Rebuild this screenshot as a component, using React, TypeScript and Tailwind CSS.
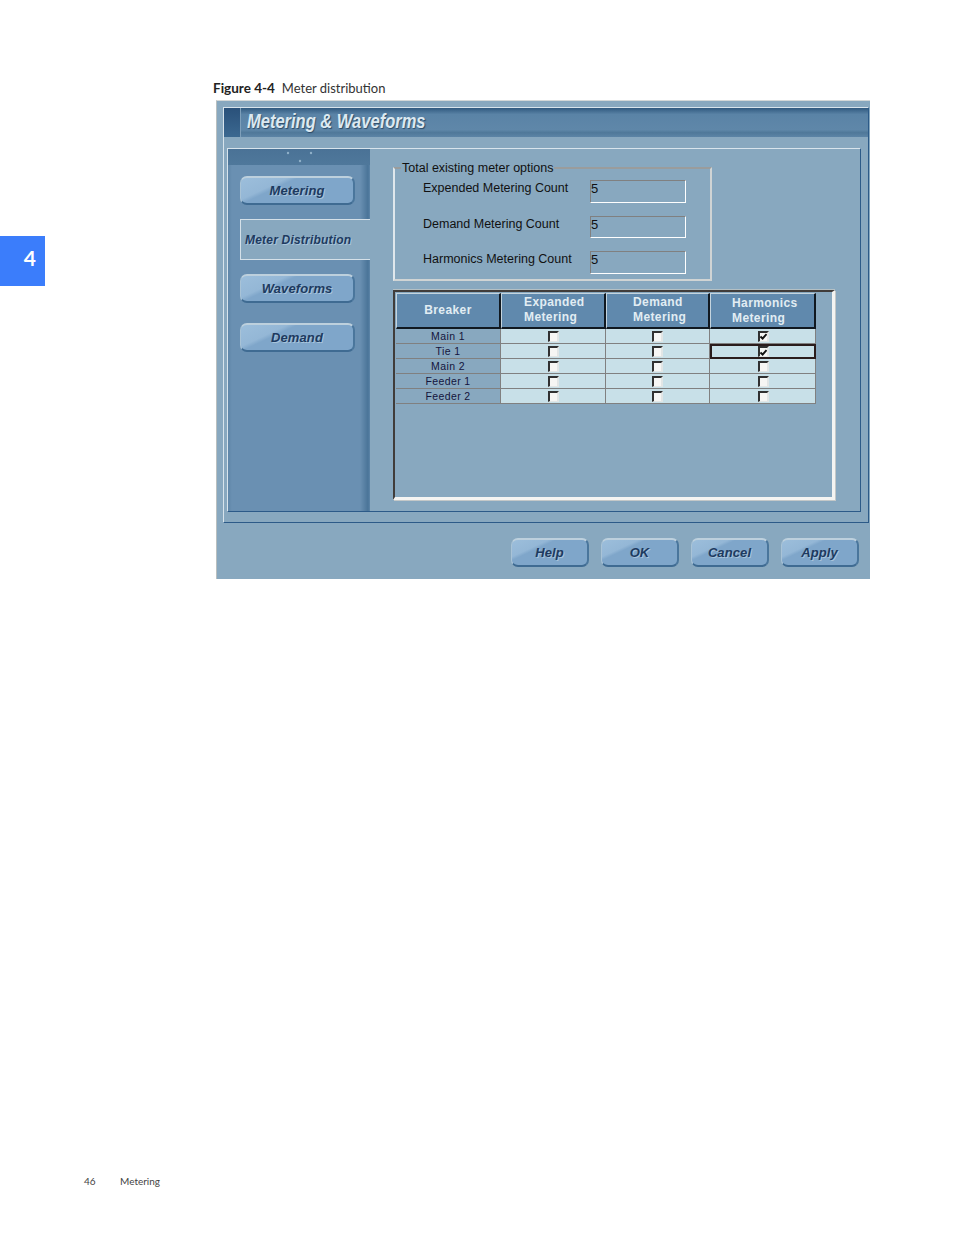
import type { ReactNode } from "react";

const SANS = "font-['Liberation_Sans',Arial,sans-serif]";
const rows = ["Main 1", "Tie 1", "Main 2", "Feeder 1", "Feeder 2"];
const counts = [
  { label: "Expended Metering Count", h: "h-[23px]" },
  { label: "Demand Metering Count", h: "h-[22px]" },
  { label: "Harmonics Metering Count", h: "h-[23px]" },
];

function SkinButton({ children, wide }: { children: ReactNode; wide?: boolean }) {
  return (
    <button
      className={`flex h-[29px] items-center justify-center rounded-[7px] border border-b-2 border-r-2 border-t-2 border-b-[#3f6b92] border-l-[#a9c3d6] border-r-[#4a769c] border-t-[#bdd0dd] bg-[linear-gradient(155deg,#9cbedb_0%,#94b7d6_28%,#7fa6ca_34%,#7fa6ca_100%)] text-[13px] font-bold italic tracking-[0.1px] text-[#1d3a60] [text-shadow:1px_1px_0_#a8c4da] ${wide ? "w-[115px]" : "w-[78px]"}`}
    >
      {children}
    </button>
  );
}

function CheckBox({ checked }: { checked?: boolean }) {
  return (
    <div className="flex h-[11px] w-[11px] items-center justify-center border-b border-l-2 border-r-2 border-t-2 border-b-[#e2e6e6] border-l-[#303030] border-r-[#e2e6e6] border-t-[#303030] bg-[#f6f6f4]">
      {checked && (
        <svg width="8" height="7" viewBox="0 0 8 7">
          <path d="M0.5 3.5 L3 5.8 L7.5 0.8" fill="none" stroke="#111" strokeWidth="2.2" />
        </svg>
      )}
    </div>
  );
}

function HeadCell({ children, className }: { children: ReactNode; className?: string }) {
  return (
    <div className={`h-[36px] border-b-2 border-l border-r-2 border-t border-b-[#101820] border-l-[#c4d4de] border-r-[#101820] border-t-[#c4d4de] bg-[#6089ad] text-[12px] font-bold leading-[15px] tracking-[0.4px] text-[#e2edf3] ${className ?? ""}`}>
      {children}
    </div>
  );
}

export default function App() {
  return (
    <div className="flex h-[1235px] w-[954px] flex-col overflow-hidden bg-white font-['Lato',sans-serif]">
      <div className="flex">
        <div className="w-[45px] pt-[236px]">
          <div className="h-[50px] w-[45px] bg-[#3b7dfb] pr-[9px] pt-[7px] text-right text-[21px] font-bold leading-[30px] text-white">4</div>
        </div>

        <div className="ml-[168px] pt-[80px]">
          <div className="h-[16px] text-[13px] leading-[16px] text-[#333]">
            <span className="text-[13.5px] font-bold text-[#222]">Figure 4-4</span>
            <span className="ml-[7px]">Meter distribution</span>
          </div>

          {/* dialog */}
          <div className={`ml-[3px] mt-[4px] h-[479px] w-[654px] border-l border-t border-l-[#b9bfbf] border-t-[#d4d8d8] bg-[#88a8bf] pl-[6px] pt-[6px] ${SANS}`}>
            <div className="h-[416px] w-[646px] border border-b-[#2c5a88] border-l-[#d8e4ec] border-r-[#2c5a88] border-t-[#d8e4ec]">
              <div className="flex h-[29px] bg-[linear-gradient(180deg,#30597f_0%,#5a83a6_22%,#5f87a9_75%,#4f7899_85%,#5c84a6_100%)]">
                <div className="h-full w-[17px] border-r border-r-[#7e9fba] bg-[linear-gradient(180deg,#2a517a,#3b6890)]" />
                <div className="ml-[6px] origin-left scale-x-[0.825] whitespace-nowrap text-[20px] font-bold italic leading-[27px] text-[#dce9f1] [text-shadow:1px_1px_1px_#2c4a68]">Metering &amp; Waveforms</div>
              </div>

              <div className="ml-[3px] mt-[11px] flex h-[364px] w-[634px] border border-b-[#2c5a88] border-l-[#d8e4ec] border-r-[#2c5a88] border-t-[#d8e4ec]">
                {/* side nav */}
                <div className="flex h-full w-[142px] flex-col bg-[linear-gradient(90deg,#5f86a8_0px,#6a90b2_4px,#6a90b2_132px,#4a7498_140px,#5d85a8_142px)]">
                  <div className="flex h-[16px] items-start justify-center bg-[linear-gradient(180deg,#4a7296,#4f789b)]">
                    <svg width="30" height="14" viewBox="0 0 30 14">
                      <circle cx="4" cy="4" r="1.2" fill="#8fb0c8" />
                      <circle cx="27" cy="4" r="1.2" fill="#8fb0c8" />
                      <circle cx="16" cy="12" r="1.2" fill="#8fb0c8" />
                    </svg>
                  </div>
                  <div className="ml-[12px] mt-[11px]">
                    <SkinButton wide>Metering</SkinButton>
                  </div>
                  <div className="ml-[12px] mt-[14px] h-[41px] w-[130px] border-b border-l border-t border-b-[#d4e0e8] border-l-[#d4e0e8] border-t-[#d4e0e8] bg-[#88a8bf] pl-[4px] text-[12px] font-bold italic leading-[40px] tracking-[0.2px] text-[#1d3a60] [text-shadow:1px_1px_0_#a8c4da]">
                    Meter Distribution
                  </div>
                  <div className="ml-[12px] mt-[14px]">
                    <SkinButton wide>Waveforms</SkinButton>
                  </div>
                  <div className="ml-[12px] mt-[20px]">
                    <SkinButton wide>Demand</SkinButton>
                  </div>
                </div>

                {/* main panel */}
                <div className="pl-[23px] pt-[11px]">
                  <fieldset className="h-[121px] w-[319px] border-2 border-b-[#d0d4d4] border-l-[#dfe7ec] border-r-[#d0d4d4] border-t-[#9a9c9c] pt-[4px]">
                    <legend className="ml-[6px] h-[16px] px-[1px] text-[12.5px] leading-[16px] text-[#111]">Total existing meter options</legend>
                    <div className="flex flex-col gap-[13px] pl-[28px]">
                      {counts.map(({ label, h }) => (
                        <div key={label} className="flex">
                          <div className="w-[167px] text-[12.5px] leading-[16px] text-[#111]">{label}</div>
                          <div className={`w-[96px] border border-b-white border-l-[#808080] border-r-white border-t-[#808080] text-[13px] leading-[16px] text-[#111] ${h}`}>5</div>
                        </div>
                      ))}
                    </div>
                  </fieldset>

                  <div className="mt-[9px] h-[210px] w-[442px] border-b-[3px] border-l-2 border-r-[3px] border-t-2 border-b-[#f4f4f2] border-l-[#403c3a] border-r-[#f4f4f2] border-t-[#403c3a] pl-[1px] pt-[1px] shadow-[0_-1px_0_#b4c0c4,1px_1px_0_#c4c8c8]">
                    <div className="grid w-[420px] grid-cols-[105px_105px_104px_106px]">
                      <HeadCell className="pt-[9px] text-center">Breaker</HeadCell>
                      <HeadCell className="pl-[22px] pt-[1px]">Expanded<br />Metering</HeadCell>
                      <HeadCell className="pl-[26px] pt-[1px]">Demand<br />Metering</HeadCell>
                      <HeadCell className="pl-[21px] pt-[2px]">Harmonics<br />Metering</HeadCell>
                      {rows.map((name, r) => (
                        <div key={name} className="contents">
                          <div className="h-[15px] border-b border-r border-[#808080] bg-[#88a8bf] text-center text-[10.5px] leading-[14px] tracking-[0.4px] text-[#14143c]">{name}</div>
                          {[0, 1, 2].map((c) => (
                            <div
                              key={c}
                              className={`flex h-[15px] items-center justify-center bg-[#c8e0e8] ${c === 2 ? "pl-[1px]" : ""} ${c === 2 && r === 1 ? "border-2 border-[#2a1c1c]" : "border-b border-r border-[#808080]"}`}
                            >
                              <CheckBox checked={c === 2 && r < 2} />
                            </div>
                          ))}
                        </div>
                      ))}
                    </div>
                  </div>
                </div>
              </div>
            </div>

            <div className="mt-[15px] flex justify-end gap-[12px] pr-[11px]">
              <SkinButton>Help</SkinButton>
              <SkinButton>OK</SkinButton>
              <SkinButton>Cancel</SkinButton>
              <SkinButton>Apply</SkinButton>
            </div>
          </div>
        </div>
      </div>

      <div className="mt-auto flex pb-[46px] pl-[84px] text-[10px] leading-[16px] text-[#444]">
        <span className="w-[36px]">46</span>
        <span>Metering</span>
      </div>
    </div>
  );
}
